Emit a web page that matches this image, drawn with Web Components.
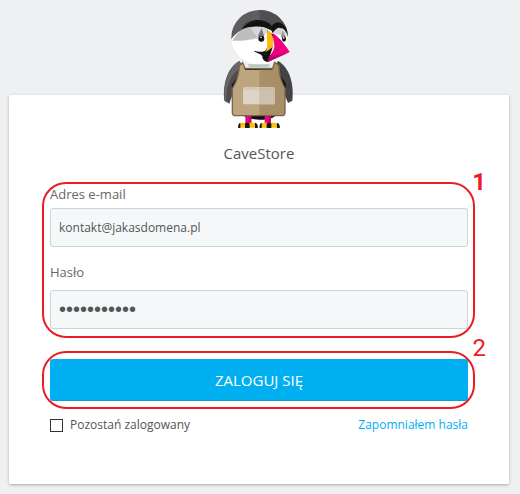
<!DOCTYPE html>
<html lang="pl">
<head>
<meta charset="utf-8">
<title>CaveStore</title>
<style>
    body {
        margin: 0;
        background: #eff0f2;
        color: #555;
        font-family: "Open Sans", "Noto Sans", sans-serif;
        font-size: 12px;
    }
</style>
</head>
<body>
<login-panel>
    <puffin-logo slot="logo"></puffin-logo>
    <span slot="title">CaveStore</span>
    <step-marker number="1" class="strong">
        <text-field label="Adres e-mail" type="text" value="kontakt@jakasdomena.pl"></text-field>
        <text-field label="Hasło" type="password" value="haslo123456"></text-field>
    </step-marker>
    <step-marker number="2">
        <submit-button>ZALOGUJ SIĘ</submit-button>
    </step-marker>
    <login-options>
        <span slot="remember">Pozostań zalogowany</span>
        <span slot="forgot">Zapomniałem hasła</span>
    </login-options>
</login-panel>

<script>
class LoginPanel extends HTMLElement {
    constructor() {
        super();
        this.attachShadow({ mode: 'open' });
        this.shadowRoot.innerHTML = `
            <style>
                :host {
                    display: block;
                    padding: 10px 11px 10px 9px;
                }

                ::slotted(puffin-logo) {
                    position: relative;
                    margin: 0 auto -35px;
                }

                main {
                    padding: 43px 41px 50px;
                    background: #fff;
                    border-radius: 1px;
                    box-shadow: 0 1px 3px rgba(0,0,0,0.3);
                }

                h1 {
                    margin: 0 0 18px;
                    font-size: 15px;
                    line-height: 30px;
                    font-weight: 400;
                    text-align: center;
                }

                .form {
                    display: flex;
                    flex-direction: column;
                }

                ::slotted(step-marker) {
                    margin-bottom: 30px;
                }

                ::slotted(step-marker:not(.strong)) {
                    margin-bottom: 15px;
                }
            </style>

            <slot name="logo"></slot>
            <main>
                <h1><slot name="title"></slot></h1>
                <form class="form">
                    <slot></slot>
                </form>
            </main>
        `;
    }
}

class PuffinLogo extends HTMLElement {
    constructor() {
        super();
        this.attachShadow({ mode: 'open' });
        this.shadowRoot.innerHTML = `
            <style>
                :host {
                    display: block;
                    width: 74px;
                    height: 120px;
                }

                svg {
                    display: block;
                }
            </style>

            <svg width="74" height="120" viewBox="36 30 222 360" aria-hidden="true">
                <defs>
                    <clipPath id="head"><ellipse cx="149" cy="112" rx="85" ry="82"/></clipPath>
                </defs>
                <!-- body and wings -->
                <path d="M88 183 C50 205 38 256 43 302 L58 311 L69 280 L76 246 L100 200 Z" fill="#4d4d4f"/>
                <path d="M88 183 C62 196 47 228 43 270 L43 302 L49 300 C49 250 68 216 96 202 Z" fill="#666"/>
                <path d="M204 183 C240 202 253 256 247 302 L234 309 L222 280 L214 246 L194 200 Z" fill="#434345"/>
                <path d="M101 204 L198 204 L228 252 L218 320 C205 352 180 359 149 359 C116 359 92 349 82 325 L65 255 Z" fill="#111"/>
                <!-- feet -->
                <path d="M106 343 H124 V372 H106 Z M164 343 H183 V372 H164 Z" fill="#ec008c"/>
                <path d="M116 343 H124 V372 H116 Z M174 343 H183 V372 H174 Z" fill="#d4006c"/>
                <path d="M85 383 C83 374 90 368 101 368 H130 C140 368 144 376 142 383 Z M149 383 C148 374 153 368 164 368 H194 C204 368 210 376 208 383 Z" fill="#fdbd12"/>
                <path d="M85 384 C83 377 86 370 91 368 L91 384 Z M105 384 V372 C105 366 119 366 119 372 V384 Z M135 384 V368 C141 369 145 376 143 384 Z M149 384 C148 376 150 370 155 368 V384 Z M170 384 V372 C170 366 184 366 184 372 V384 Z M201 384 V368 C207 369 211 377 209 384 Z" fill="#17171c"/>
                <!-- head -->
                <ellipse cx="149" cy="112" rx="85" ry="82" fill="#fff"/>
                <g clip-path="url(#head)">
                    <path d="M55 138 C64 102 100 80 145 82 C170 82 180 88 188 94 C198 80 221 78 233 110 L260 90 L220 25 L70 25 L40 100 Z" fill="#5d5d5f"/>
                    <path d="M145 25 L155 72 C174 76 183 86 188 94 C198 75 221 72 233 105 L250 90 L220 25 Z" fill="#4f4f51"/>
                    <path d="M83 95 C103 58 160 52 184 90 L188 100 C198 84 218 80 230 100 L230 88 C216 60 193 65 186 78 C160 50 105 55 83 95 Z" fill="#111"/>
                    <path d="M95 88 C112 60 162 50 184 92 C166 78 132 72 95 88 Z" fill="#111"/>
                    <path d="M68 122 C86 88 120 76 154 81 C168 82 176 88 176 94 L158 112 C125 121 96 123 68 122 Z" fill="#d6d6d8"/>
                    <path d="M68 122 C80 98 98 85 118 81 L143 112 C111 121 91 122 68 122 Z" fill="#bdbdbf"/>
                    <path d="M190 98 C201 78 217 77 231 103 L226 112 L211 106 Z" fill="#d4d4d6"/>
                    <path d="M216 84 C223 88 229 96 231 107 L222 111 Z" fill="#dedee0"/>
                </g>
                <path d="M155 85 L163 111 L143 109 Z" fill="#77777b"/>
                <circle cx="154" cy="116" r="9" fill="#111"/>
                <circle cx="153" cy="112" r="2.5" fill="#fff"/>
                <path d="M219 90 L229 119 L212 112 Z" fill="#98989b"/>
                <ellipse cx="222" cy="117" rx="6" ry="8" fill="#111"/>
                <circle cx="221" cy="113" r="2.5" fill="#fff"/>
                <!-- beak -->
                <path d="M172 91 C180 96 184 104 190 103 L187 145 L174 186 C164 185 156 178 157 168 C151 160 141 161 131 152 C143 156 153 157 165 153 C179 139 177 112 172 91 Z" fill="#111"/>
                <path d="M173 91 C187 98 192 116 190 134 C188 145 175 150 166 157 C179 137 165 113 173 91 Z" fill="#fdb913"/>
                <path d="M188 99 C206 110 224 132 239 156 L174 186 C172 169 194 156 193 137 C193 123 187 112 188 99 Z" fill="#ed0080"/>
                <path d="M239 156 L174 186 C171 181 177 171 182 165 C201 168 221 163 239 156 Z" fill="#bd006b"/>
                <!-- apron -->
                <path d="M88 197 L98 188 L105 209 H188 L194 187 L207 197 C206 237 220 252 225 266 V338 Q225 347 215 347 H78 Q67 347 67 338 V266 C75 250 87 235 88 197 Z" fill="#bda57e"/>
                <path d="M148 209 H188 L194 187 L207 197 C206 237 220 252 225 266 V338 Q225 347 215 347 H148 Z" fill="#a98f68"/>
                <path d="M112 193 H181 L175 201 H119 Z" fill="#b5cac2"/>
                <path d="M88 197 L98 188 L105 205 H188 L194 187 L207 197 C206 237 220 252 225 266 V338 Q225 347 215 347 H78 Q67 347 67 338 V266 C75 250 87 235 88 197 Z" fill="none" stroke="#806248" stroke-width="4"/>
                <rect x="99" y="262" width="95" height="51" rx="4" fill="#ded4c5"/>
                <path d="M148 262 H190 Q194 262 194 266 V309 Q194 313 190 313 H148 Z" fill="#cec0ab"/>
                <path d="M99 267 H194" stroke="#c6b495" stroke-width="2"/>
            </svg>
        `;
    }
}

class StepMarker extends HTMLElement {
    constructor() {
        super();
        this.attachShadow({ mode: 'open' });
        this.shadowRoot.innerHTML = `
            <style>
                :host {
                    display: flex;
                    flex-direction: column;
                    gap: 17px;
                    position: relative;
                    --red: #ed1c24;
                }

                .ring {
                    position: absolute;
                    inset: -8px -7px -8px -8px;
                    border: 2px solid var(--red);
                    border-radius: 24px;
                    pointer-events: none;
                }

                :host(.strong) .ring {
                    top: -4px;
                    bottom: -9px;
                }

                .number {
                    position: absolute;
                    top: -29px;
                    right: -18px;
                    color: var(--red);
                    font-family: Roboto, sans-serif;
                    font-size: 24px;
                    line-height: 36px;
                }

                :host(.strong) .number {
                    top: -22px;
                    font-weight: 700;
                }
            </style>

            <slot></slot>
            <div class="ring"></div>
            <span class="number"></span>
        `;
        this.shadowRoot.querySelector('.number').textContent = this.getAttribute('number');
    }
}

class TextField extends HTMLElement {
    constructor() {
        super();
        this.attachShadow({ mode: 'open' });
        this.shadowRoot.innerHTML = `
            <style>
                :host {
                    display: block;
                }

                label {
                    display: block;
                    margin-bottom: 6px;
                    color: #666;
                    font-size: 13px;
                    line-height: 16px;
                }

                :host([type="password"]) label {
                    margin-bottom: 10px;
                }

                #field {
                    display: block;
                    box-sizing: border-box;
                    width: 100%;
                    height: 39px;
                    padding: 0 8px;
                    border: 1px solid #c7d6db;
                    border-radius: 3px;
                    outline: none;
                    background: #f5f8f9;
                    color: #555;
                    font: inherit;
                }

                #field[type="password"] {
                    font-family: "Liberation Sans", sans-serif;
                    font-size: 20px;
                }
            </style>

            <label for="field"></label>
            <input id="field">
        `;
        const field = this.shadowRoot.querySelector('#field');
        this.shadowRoot.querySelector('label').textContent = this.getAttribute('label');
        field.type = this.getAttribute('type');
        field.value = this.getAttribute('value');
    }
}

class SubmitButton extends HTMLElement {
    constructor() {
        super();
        this.attachShadow({ mode: 'open' });
        this.shadowRoot.innerHTML = `
            <style>
                :host {
                    display: block;
                }

                button {
                    display: block;
                    width: 100%;
                    height: 42px;
                    border: 1px solid #00aff0;
                    border-bottom-color: #1b9bcb;
                    border-radius: 3px;
                    background: #00aff0;
                    color: #fff;
                    font: inherit;
                    font-size: 15px;
                    cursor: pointer;
                }
            </style>

            <button type="button"><slot></slot></button>
        `;
    }
}

class LoginOptions extends HTMLElement {
    constructor() {
        super();
        this.attachShadow({ mode: 'open' });
        this.shadowRoot.innerHTML = `
            <style>
                :host {
                    display: flex;
                    justify-content: space-between;
                    line-height: 18px;
                }

                label {
                    display: flex;
                    align-items: center;
                    gap: 7px;
                }

                input {
                    appearance: none;
                    box-sizing: border-box;
                    width: 13px;
                    height: 13px;
                    margin: 0;
                    border: 1px solid #333;
                    background: #fff;
                }

                input:checked {
                    background: #00aff0;
                }

                a {
                    color: #00aff0;
                    text-decoration: none;
                }
            </style>

            <label><input type="checkbox"><slot name="remember"></slot></label>
            <a href="#"><slot name="forgot"></slot></a>
        `;
    }
}

customElements.define('login-panel', LoginPanel);
customElements.define('puffin-logo', PuffinLogo);
customElements.define('step-marker', StepMarker);
customElements.define('text-field', TextField);
customElements.define('submit-button', SubmitButton);
customElements.define('login-options', LoginOptions);
</script>
</body>
</html>
